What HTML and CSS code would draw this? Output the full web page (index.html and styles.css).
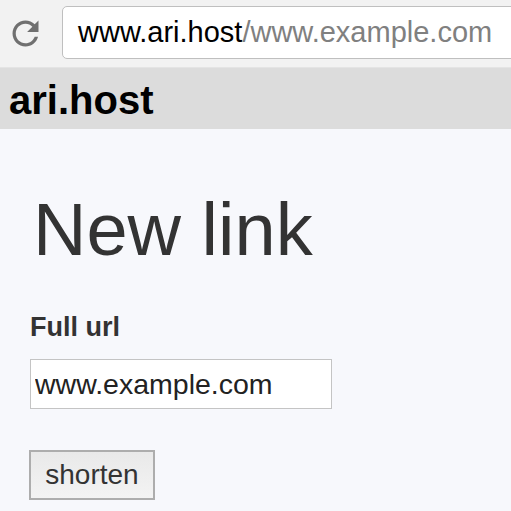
FILE: index.html
```html
<!DOCTYPE html>
<html>
<head>
<meta charset="utf-8">
<link rel="stylesheet" href="styles.css">
</head>
<body>
<div class="chrome">
  <svg class="reload" viewBox="0 0 24 24" width="39" height="39"><path fill="#707070" d="M17.65 6.35C16.2 4.9 14.21 4 12 4c-4.42 0-7.99 3.58-7.99 8s3.57 8 7.99 8c3.73 0 6.84-2.55 7.73-6h-2.08c-.82 2.33-3.04 4-5.65 4-3.31 0-6-2.69-6-6s2.69-6 6-6c1.66 0 3.14.69 4.22 1.78L13 11h7V4l-2.35 2.35z"/></svg>
  <div class="address"><span class="host">www.ari.host</span><span class="path">/www.example.com</span></div>
</div>
<div class="site-header"><span class="brand">ari.host</span></div>
<main class="content">
  <h1 class="title">New link</h1>
  <form class="form">
    <label class="label" for="url">Full url</label>
    <input class="field" id="url" type="text" value="www.example.com">
    <button class="btn" type="button">shorten</button>
  </form>
</main>
</body>
</html>
```
FILE: styles.css
```css
html, body {
  margin: 0;
  padding: 0;
  height: 100%;
}
body {
  font-family: "Liberation Sans", Arial, sans-serif;
  background: #f7f8fc;
  overflow: hidden;
}
.chrome {
  display: flex;
  align-items: flex-start;
  height: 68px;
  padding: 6px 0 0 6px;
  box-sizing: border-box;
  background: #f2f2f2;
  border-bottom: 1px solid #e4e4e4;
  overflow: hidden;
}
.reload {
  flex: 0 0 39px;
  margin-top: 8px;
}
.address {
  flex: 0 0 520px;
  margin-left: 17px;
  height: 53px;
  box-sizing: border-box;
  border: 1px solid #bfbfbf;
  border-radius: 5px;
  background: #fff;
  padding-left: 15px;
  font-size: 29px;
  line-height: 51px;
  white-space: nowrap;
}
.host { color: #000; }
.path { color: #808080; }
.site-header {
  height: 61px;
  box-sizing: border-box;
  background: #dcdcdc;
  padding: 4px 0 0 9px;
}
.brand {
  font-weight: bold;
  font-size: 40px;
  line-height: 57px;
  color: #000;
}
.content {
  padding: 64px 0 0 30px;
}
.title {
  margin: 0;
  font-size: 74px;
  line-height: 74px;
  font-weight: normal;
  color: #333;
  padding-left: 3px;
}
.form {
  display: flex;
  flex-direction: column;
  align-items: flex-start;
  margin-top: 47px;
}
.label {
  font-weight: bold;
  font-size: 27px;
  line-height: 27px;
  color: #333;
}
.field {
  margin-top: 18px;
  width: 302px;
  height: 50px;
  box-sizing: border-box;
  border: 1px solid #c4c4c4;
  background: #fff;
  padding: 0 4px;
  font-family: "Liberation Sans", Arial, sans-serif;
  font-size: 28.5px;
  color: #222;
  outline: none;
}
.btn {
  margin: 41px 0 0 -1px;
  width: 126px;
  height: 50px;
  box-sizing: border-box;
  border: 2px solid #adadad;
  background: linear-gradient(#e9e9e9, #f3f3f3);
  padding: 0;
  font-family: "Liberation Sans", Arial, sans-serif;
  font-size: 28px;
  color: #333;
}
```
